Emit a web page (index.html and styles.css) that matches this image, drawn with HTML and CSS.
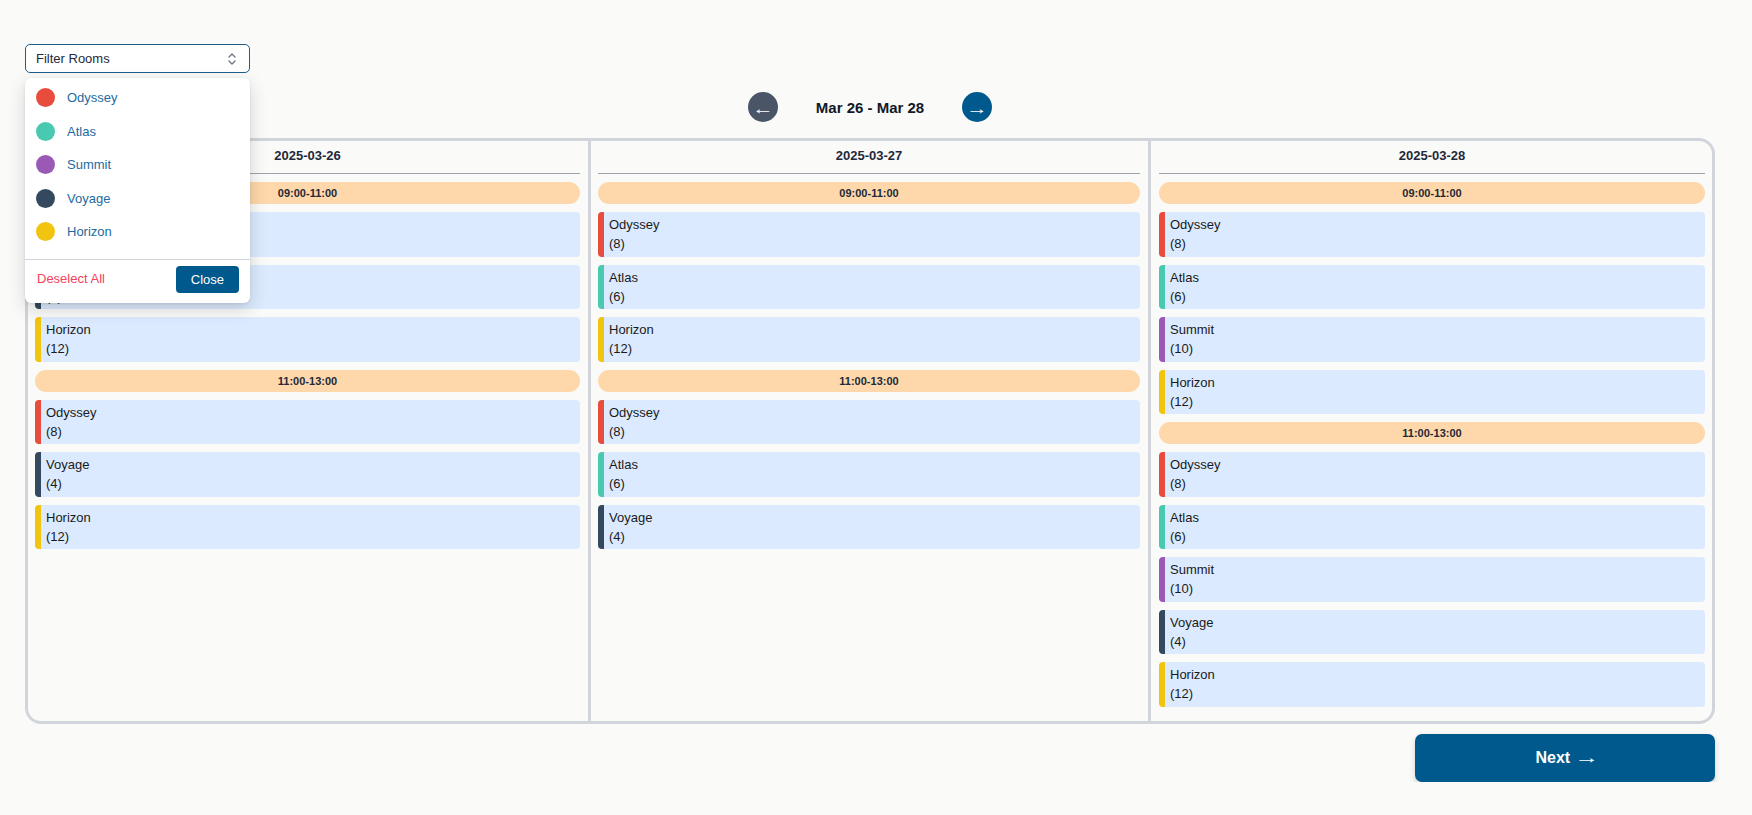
FILE: index.html
```html
<!DOCTYPE html>
<html lang="en">
<head>
<meta charset="utf-8">
<title>Room Schedule</title>
<link rel="stylesheet" href="styles.css">
</head>
<body>
<div class="page">
  <div class="toolbar">
    <div class="filter">
      <button class="select" type="button">
        <span>Filter Rooms</span>
        <svg class="chev" width="10" height="14" viewBox="0 0 10 14" aria-hidden="true">
          <path d="M2 5 L5 2 L8 5" />
          <path d="M2 9 L5 12 L8 9" />
        </svg>
      </button>
      <div class="dropdown">
        <ul class="options">
          <li class="option"><span class="dot c-odyssey"></span>Odyssey</li>
          <li class="option"><span class="dot c-atlas"></span>Atlas</li>
          <li class="option"><span class="dot c-summit"></span>Summit</li>
          <li class="option"><span class="dot c-voyage"></span>Voyage</li>
          <li class="option"><span class="dot c-horizon"></span>Horizon</li>
        </ul>
        <div class="dd-footer">
          <button class="deselect" type="button">Deselect All</button>
          <button class="close" type="button">Close</button>
        </div>
      </div>
    </div>
  </div>

  <div class="nav">
    <button class="nav-btn prev" type="button"><span class="arrow">←</span></button>
    <div class="range">Mar 26 - Mar 28</div>
    <button class="nav-btn next-week" type="button"><span class="arrow">→</span></button>
  </div>

  <div class="calendar">
    <div class="day">
      <div class="day-head">2025-03-26</div>
      <div class="slot">09:00-11:00</div>
      <div class="booking b-odyssey"><div>Odyssey</div><div>(8)</div></div>
      <div class="booking b-voyage"><div>Voyage</div><div>(4)</div></div>
      <div class="booking b-horizon"><div>Horizon</div><div>(12)</div></div>
      <div class="slot">11:00-13:00</div>
      <div class="booking b-odyssey"><div>Odyssey</div><div>(8)</div></div>
      <div class="booking b-voyage"><div>Voyage</div><div>(4)</div></div>
      <div class="booking b-horizon"><div>Horizon</div><div>(12)</div></div>
    </div>
    <div class="day">
      <div class="day-head">2025-03-27</div>
      <div class="slot">09:00-11:00</div>
      <div class="booking b-odyssey"><div>Odyssey</div><div>(8)</div></div>
      <div class="booking b-atlas"><div>Atlas</div><div>(6)</div></div>
      <div class="booking b-horizon"><div>Horizon</div><div>(12)</div></div>
      <div class="slot">11:00-13:00</div>
      <div class="booking b-odyssey"><div>Odyssey</div><div>(8)</div></div>
      <div class="booking b-atlas"><div>Atlas</div><div>(6)</div></div>
      <div class="booking b-voyage"><div>Voyage</div><div>(4)</div></div>
    </div>
    <div class="day">
      <div class="day-head">2025-03-28</div>
      <div class="slot">09:00-11:00</div>
      <div class="booking b-odyssey"><div>Odyssey</div><div>(8)</div></div>
      <div class="booking b-atlas"><div>Atlas</div><div>(6)</div></div>
      <div class="booking b-summit"><div>Summit</div><div>(10)</div></div>
      <div class="booking b-horizon"><div>Horizon</div><div>(12)</div></div>
      <div class="slot">11:00-13:00</div>
      <div class="booking b-odyssey"><div>Odyssey</div><div>(8)</div></div>
      <div class="booking b-atlas"><div>Atlas</div><div>(6)</div></div>
      <div class="booking b-summit"><div>Summit</div><div>(10)</div></div>
      <div class="booking b-voyage"><div>Voyage</div><div>(4)</div></div>
      <div class="booking b-horizon"><div>Horizon</div><div>(12)</div></div>
    </div>
  </div>

  <div class="actions">
    <button class="next" type="button">Next <span class="next-arrow">→</span></button>
  </div>
</div>
</body>
</html>
```

FILE: styles.css
```css
* { box-sizing: border-box; }

html, body {
  margin: 0;
  padding: 0;
  background: #fafaf9;
  font-family: "Liberation Sans", Arial, sans-serif;
  color: #1a1a1a;
}

button {
  font-family: inherit;
  cursor: pointer;
}

.page {
  padding: 44px 37px 0 25px;
}

/* Filter select */
.toolbar {
  height: 29px;
}

.filter {
  position: relative;
  width: 225px;
}

.select {
  width: 225px;
  height: 29px;
  display: flex;
  align-items: center;
  justify-content: space-between;
  padding: 0 12px 0 10px;
  background: #ffffff;
  border: 1px solid #1f5d88;
  border-radius: 5px;
  font-size: 13px;
  color: #1f2937;
}

.chev path {
  fill: none;
  stroke: #6b7280;
  stroke-width: 1.3;
  stroke-linecap: round;
  stroke-linejoin: round;
}

.dropdown {
  position: absolute;
  top: 34px;
  left: 0;
  width: 225px;
  background: #ffffff;
  border-radius: 6px;
  box-shadow: 0 6px 18px rgba(0, 0, 0, 0.16), 0 1px 3px rgba(0, 0, 0, 0.08);
  z-index: 10;
}

.options {
  list-style: none;
  margin: 0;
  padding: 3px 0 10px;
}

.option {
  height: 33.5px;
  display: flex;
  align-items: center;
  gap: 12px;
  padding: 0 11px;
  font-size: 13px;
  color: #1d6ba0;
}

.dot {
  width: 19px;
  height: 19px;
  border-radius: 50%;
  flex: none;
}

.c-odyssey { background: #e74c3c; }
.c-atlas { background: #48c9b0; }
.c-summit { background: #9b59b6; }
.c-voyage { background: #34495e; }
.c-horizon { background: #f1c40f; }

.dd-footer {
  display: flex;
  align-items: center;
  justify-content: space-between;
  border-top: 1px solid #d1d5db;
  padding: 6px 11px 10px;
}

.deselect {
  background: none;
  border: none;
  padding: 0 0 2px 1px;
  font-size: 13px;
  color: #f43f5e;
}

.close {
  height: 27px;
  padding: 0 15px;
  background: #00598c;
  color: #ffffff;
  border: none;
  border-radius: 4px;
  font-size: 13px;
}

/* Week navigation */
.nav {
  height: 30px;
  margin: 19px 0 16px;
  display: flex;
  align-items: center;
  justify-content: center;
  gap: 38px;
}

.nav-btn {
  width: 30px;
  height: 30px;
  border-radius: 50%;
  border: none;
  padding: 3px 0 0;
  color: #ffffff;
  font-size: 16px;
  line-height: 1;
  display: flex;
  align-items: center;
  justify-content: center;
}

.arrow {
  display: inline-block;
  transform: scaleX(1.35);
}

.prev { background: #4a5568; }
.next-week { background: #00598c; }

.range {
  font-size: 15px;
  font-weight: bold;
  color: #111827;
}

/* Calendar */
.calendar {
  display: grid;
  grid-template-columns: 560px 560px 1fr;
  border: 3px solid #d1d5db;
  border-radius: 16px;
}

.day {
  display: flex;
  flex-direction: column;
  gap: 8px;
  padding: 0 8px 14px 7px;
  min-width: 0;
}

.day + .day {
  border-left: 3px solid #d1d5db;
  padding-left: 7px;
}

.day:last-child {
  padding-left: 8px;
  padding-right: 7px;
}

.day-head {
  text-align: center;
  font-size: 13px;
  font-weight: bold;
  line-height: 16px;
  padding: 7px 0 9px;
  color: #1e293b;
  border-bottom: 1px solid #9ca3af;
}

.slot {
  height: 22px;
  line-height: 22px;
  text-align: center;
  background: #fed7aa;
  border-radius: 12px;
  font-size: 11px;
  font-weight: bold;
  color: #1f2937;
}

.booking {
  background: #dbeafe;
  border-left: 6px solid #999;
  border-radius: 4px;
  padding: 3px 8px 3.5px 5px;
  font-size: 13px;
  line-height: 19px;
  color: #1a1a1a;
}

.b-odyssey { border-left-color: #e74c3c; }
.b-atlas { border-left-color: #48c9b0; }
.b-summit { border-left-color: #9b59b6; }
.b-voyage { border-left-color: #34495e; }
.b-horizon { border-left-color: #f1c40f; }

/* Footer action */
.actions {
  display: flex;
  justify-content: flex-end;
  margin-top: 10px;
}

.next {
  width: 300px;
  height: 48px;
  background: #00598c;
  color: #ffffff;
  border: none;
  border-radius: 7px;
  font-size: 16px;
  font-weight: bold;
  box-shadow: 0 3px 6px rgba(0, 0, 0, 0.16);
}

.next-arrow {
  display: inline-block;
  font-weight: normal;
  transform: scaleX(1.55);
  margin-left: 4px;
}
```
